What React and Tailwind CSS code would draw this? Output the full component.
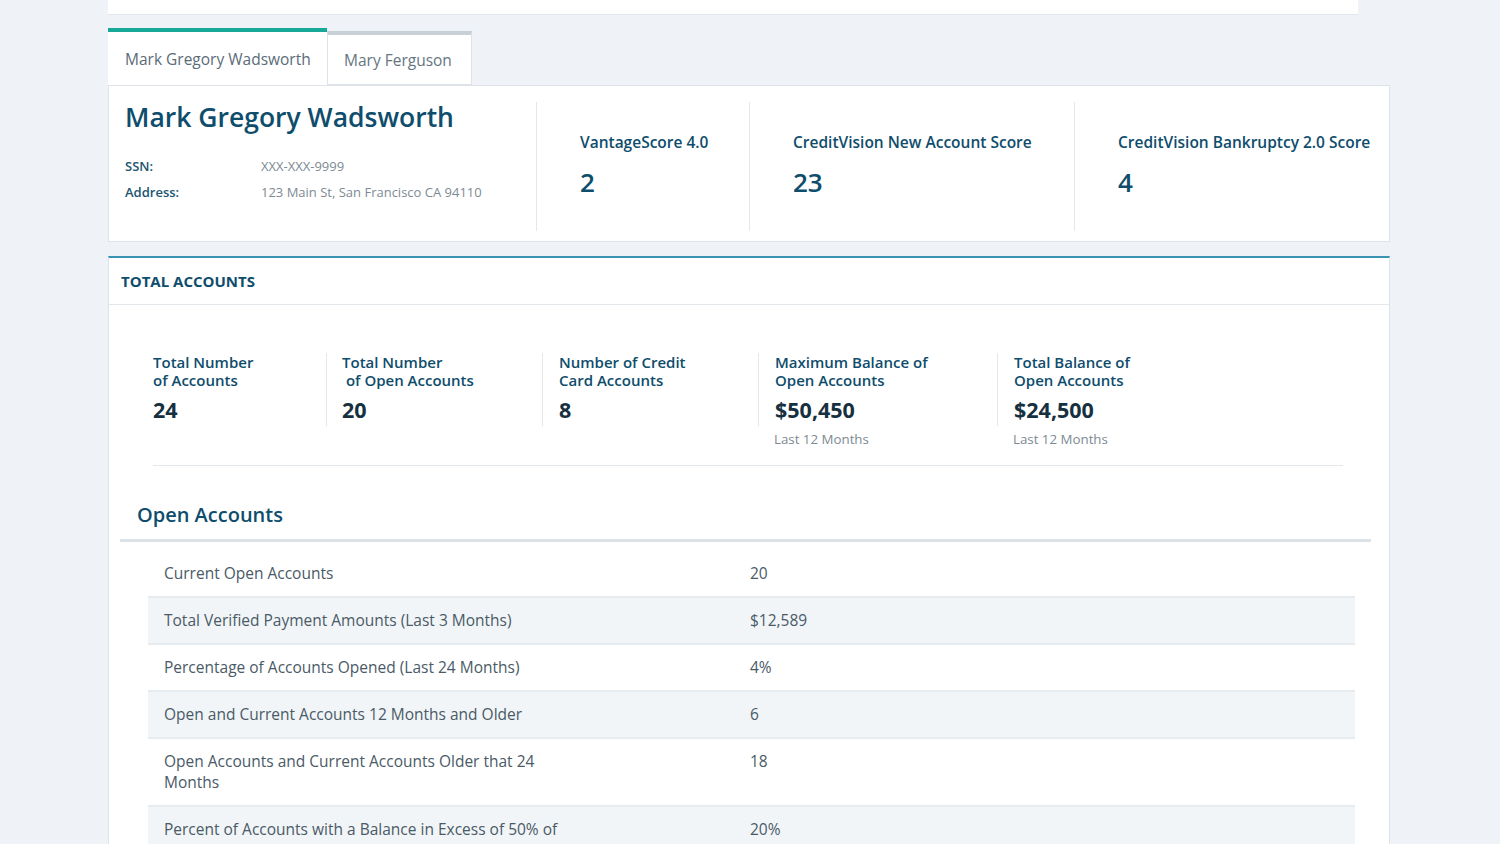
import React from 'react'

const scores = [
  { label: 'VantageScore 4.0', value: '2', w: 'w-[213px]' },
  { label: 'CreditVision New Account Score', value: '23', w: 'w-[325px]' },
  { label: 'CreditVision Bankruptcy 2.0 Score', value: '4', w: 'flex-1' },
]

const stats = [
  { label: ['Total Number', 'of Accounts'], value: '24', w: 'w-[173px]', pad: 'pl-0', first: true },
  { label: ['Total Number', '\u00a0of Open Accounts'], value: '20', w: 'w-[216px]', pad: 'pl-[15px]' },
  { label: ['Number of Credit', 'Card Accounts'], value: '8', w: 'w-[216px]', pad: 'pl-[16px]' },
  { label: ['Maximum Balance of', 'Open Accounts'], value: '$50,450', w: 'w-[239px]', pad: 'pl-[16px]', sub: 'Last 12 Months' },
  { label: ['Total Balance of', 'Open Accounts'], value: '$24,500', w: 'w-[239px]', pad: 'pl-[16px]', sub: 'Last 12 Months' },
]

const rows = [
  { label: 'Current Open Accounts', value: '20' },
  { label: 'Total Verified Payment Amounts (Last 3 Months)', value: '$12,589' },
  { label: 'Percentage of Accounts Opened (Last 24 Months)', value: '4%' },
  { label: 'Open and Current Accounts 12 Months and Older', value: '6' },
  { label: 'Open Accounts and Current Accounts Older that 24 Months', value: '18' },
  { label: 'Percent of Accounts with a Balance in Excess of 50% of', value: '20%' },
]

const App = () => {
  return (
    <div className="w-full bg-[#eff3f7] font-['Open_Sans',sans-serif] overflow-hidden h-[844px]">
      <div className="ml-[108px] w-[1282px]">
        {/* Top card edge */}
        <div className="h-[15px] w-[1250px] bg-white border-b border-[#e1e7ec]"></div>

        {/* Tabs */}
        <div className="mt-[13px] flex items-end">
          <div className="h-[57px] w-[219px] bg-white border-t-4 border-[#17a89a] flex items-center pl-[17px]">
            <span className="text-[15.5px] text-[#5b6c79] pt-[3px]">Mark Gregory Wadsworth</span>
          </div>
          <div className="h-[54px] w-[145px] bg-white border-t-4 border-x border-x-[#dde3e8] border-t-[#c9d1d8] flex items-center pl-[16px] border-b border-b-[#dde3e8]">
            <span className="text-[15.5px] text-[#65767f] pt-[3px]">Mary Ferguson</span>
          </div>
        </div>

        {/* Person panel */}
        <div className="h-[157px] bg-white border border-[#dde3e8] flex pt-[16px] pb-[10px]">
          <div className="w-[428px] border-r border-[#e3e8ec] pl-[16px]">
            <h1 className="text-[26.5px] font-semibold text-[#0e4d6c] leading-[36px] mt-[-3px]">Mark Gregory Wadsworth</h1>
            <div className="mt-[18px] text-[13px] leading-[26px]">
              <div className="flex">
                <span className="w-[136px] font-semibold text-[#205570]">SSN:</span>
                <span className="text-[#7d8a93]">XXX-XXX-9999</span>
              </div>
              <div className="flex">
                <span className="w-[136px] font-semibold text-[#205570]">Address:</span>
                <span className="text-[#7d8a93]">123 Main St, San Francisco CA 94110</span>
              </div>
            </div>
          </div>
          {scores.map((s, i) => (
            <div key={s.label} className={`${s.w} ${i < 2 ? 'border-r border-[#e3e8ec]' : ''} pl-[43px] pt-[29px]`}>
              <div className="text-[15.5px] font-semibold text-[#0e4d6c] leading-[22px]">{s.label}</div>
              <div className="mt-[11px] text-[26px] font-semibold text-[#0e4d6c] leading-[36px]">{s.value}</div>
            </div>
          ))}
        </div>

        {/* Total accounts */}
        <div className="mt-[14px] bg-white border-x border-[#dde3e8] border-t-2 border-t-[#3a93b3]">
          <div className="h-[47px] border-b border-[#e3e8ec] flex items-center pl-[12px]">
            <span className="text-[15px] font-bold text-[#0e4d6c]">TOTAL ACCOUNTS</span>
          </div>

          <div className="pt-[48px] pl-[44px] pr-[46px]">
            <div className="flex border-b border-[#e3e8ec] pb-[15px]">
              {stats.map((s) => (
                <div key={s.value} className={s.w}>
                  <div className={`h-[73px] ${s.pad} ${s.first ? '' : 'border-l border-[#e3e8ec]'}`}>
                    <div className="text-[15px] font-semibold text-[#0e4d6c] leading-[18px] whitespace-pre">
                      {s.label[0]}
                      <br />
                      {s.label[1]}
                    </div>
                    <div className="mt-[7px] text-[21.5px] font-bold text-[#17303f] leading-[28px]">{s.value}</div>
                  </div>
                  <div className={`h-[24px] text-[13.3px] text-[#7d8a93] leading-[26px] ${s.pad}`}>
                    {s.sub}
                  </div>
                </div>
              ))}
            </div>
          </div>

          {/* Open accounts */}
          <div className="pl-[28px] pt-[35px] pb-[10px]">
            <h2 className="text-[20px] font-semibold text-[#0e4d6c] leading-[28px]">Open Accounts</h2>
          </div>
          <div className="ml-[11px] mr-[18px] h-[3px] bg-[#dce3e8]"></div>

          <div className="ml-[39px] mr-[34px] mt-[9px]">
            {rows.map((r, i) => (
              <div
                key={r.label}
                className={`flex pl-[16px] pr-[17px] py-[12px] text-[15.5px] leading-[21px] text-[#4a5a66] border-b-2 border-[#e6ebef] ${i % 2 === 1 ? 'bg-[#f1f5f8]' : 'bg-white'}`}
              >
                <div className="w-[586px]">
                  <div className="max-w-[400px]">{r.label}</div>
                </div>
                <div>{r.value}</div>
              </div>
            ))}
          </div>
        </div>
      </div>
    </div>
  )
}

export default App
